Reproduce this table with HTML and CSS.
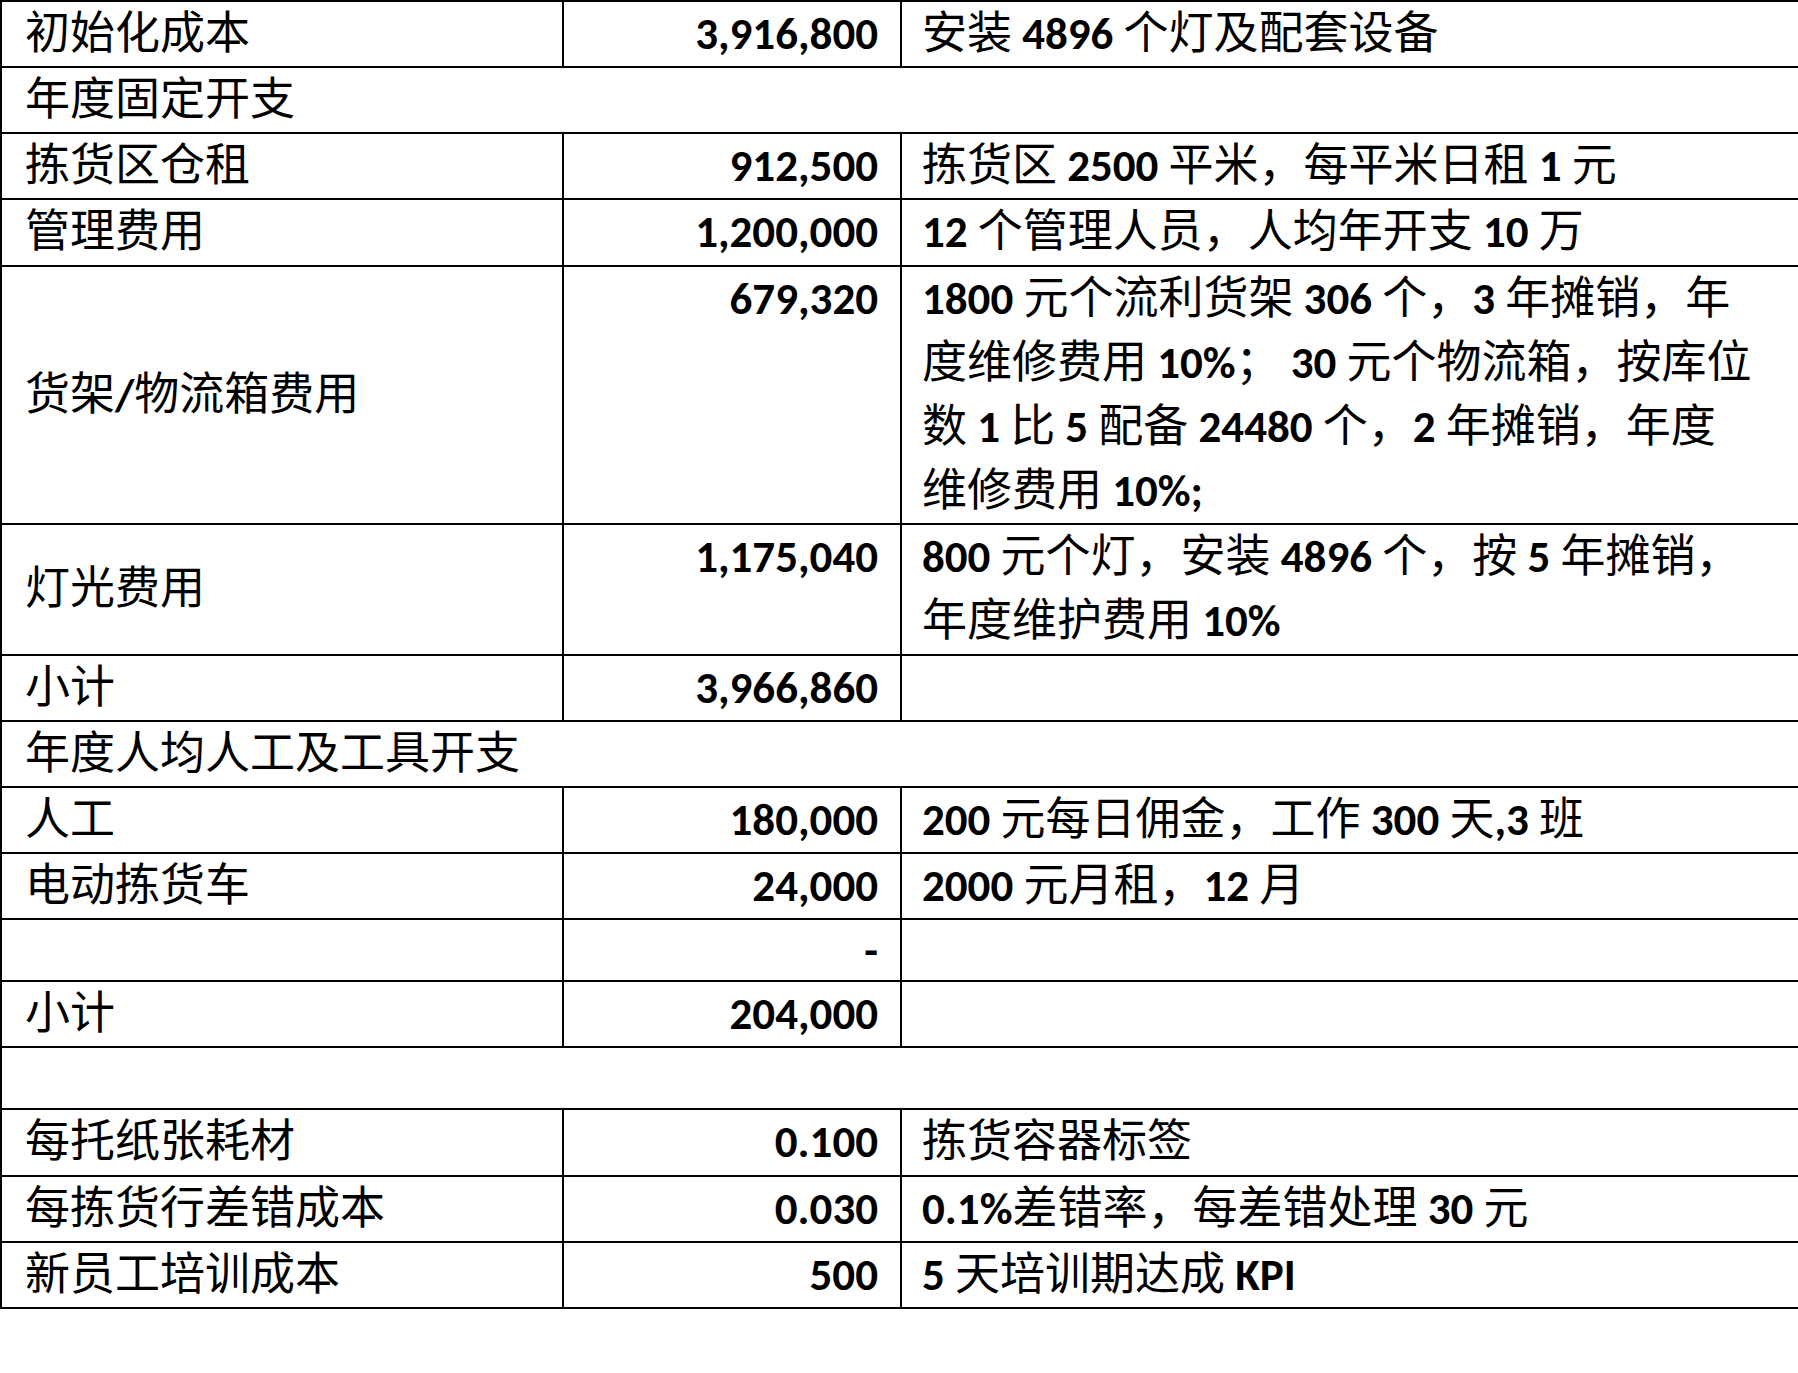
FILE: index.html
```html
<!DOCTYPE html>
<html lang="zh-CN">
<head>
<meta charset="utf-8">
<title>成本表</title>
<link rel="stylesheet" href="styles.css">
</head>
<body>
<table class="cost">
  <colgroup>
    <col class="c-label">
    <col class="c-num">
    <col class="c-desc">
  </colgroup>
  <tbody>
    <tr>
      <td class="label">初始化成本</td>
      <td class="num">3,916,800</td>
      <td class="desc">安装 <span class="n">4896</span> 个灯及配套设备</td>
    </tr>
    <tr>
      <td class="label" colspan="3">年度固定开支</td>
    </tr>
    <tr>
      <td class="label">拣货区仓租</td>
      <td class="num">912,500</td>
      <td class="desc">拣货区 <span class="n">2500</span> 平米，每平米日租 <span class="n">1</span> 元</td>
    </tr>
    <tr>
      <td class="label">管理费用</td>
      <td class="num">1,200,000</td>
      <td class="desc"><span class="n">12</span> 个管理人员，人均年开支 <span class="n">10</span> 万</td>
    </tr>
    <tr>
      <td class="label">货架<span class="n">/</span>物流箱费用</td>
      <td class="num">679,320</td>
      <td class="desc"><span class="ln"><span class="n">1800</span> 元个流利货架 <span class="n">306</span> 个，<span class="n">3</span> 年摊销，年</span><span class="ln">度维修费用 <span class="n">10%</span>； <span class="n">30</span> 元个物流箱，按库位</span><span class="ln">数 <span class="n">1</span> 比 <span class="n">5</span> 配备 <span class="n">24480</span> 个，<span class="n">2</span> 年摊销，年度</span><span class="ln">维修费用 <span class="n">10%;</span></span></td>
    </tr>
    <tr>
      <td class="label">灯光费用</td>
      <td class="num">1,175,040</td>
      <td class="desc"><span class="ln"><span class="n">800</span> 元个灯，安装 <span class="n">4896</span> 个，按 <span class="n">5</span> 年摊销，</span><span class="ln">年度维护费用 <span class="n">10%</span></span></td>
    </tr>
    <tr>
      <td class="label">小计</td>
      <td class="num">3,966,860</td>
      <td class="desc"></td>
    </tr>
    <tr>
      <td class="label" colspan="3">年度人均人工及工具开支</td>
    </tr>
    <tr>
      <td class="label">人工</td>
      <td class="num">180,000</td>
      <td class="desc"><span class="n">200</span> 元每日佣金，工作 <span class="n">300</span> 天<span class="n">,3</span> 班</td>
    </tr>
    <tr>
      <td class="label">电动拣货车</td>
      <td class="num">24,000</td>
      <td class="desc"><span class="n">2000</span> 元月租，<span class="n">12</span> 月</td>
    </tr>
    <tr class="short">
      <td class="label"></td>
      <td class="num">-</td>
      <td class="desc"></td>
    </tr>
    <tr>
      <td class="label">小计</td>
      <td class="num">204,000</td>
      <td class="desc"></td>
    </tr>
    <tr class="spacer">
      <td colspan="3"></td>
    </tr>
    <tr>
      <td class="label">每托纸张耗材</td>
      <td class="num">0.100</td>
      <td class="desc">拣货容器标签</td>
    </tr>
    <tr>
      <td class="label">每拣货行差错成本</td>
      <td class="num">0.030</td>
      <td class="desc"><span class="n">0.1%</span>差错率，每差错处理 <span class="n">30</span> 元</td>
    </tr>
    <tr>
      <td class="label">新员工培训成本</td>
      <td class="num">500</td>
      <td class="desc"><span class="n">5</span> 天培训期达成 <span class="n">KPI</span></td>
    </tr>
  </tbody>
</table>
</body>
</html>
```

FILE: styles.css
```css
html, body {
  margin: 0;
  padding: 0;
  background: #ffffff;
  overflow: hidden;
}

body {
  width: 1798px;
  height: 1373px;
}

.cost {
  border-collapse: collapse;
  table-layout: fixed;
  width: 1812px;
  font-family: Carlito, "Liberation Sans", "Noto Sans CJK SC", sans-serif;
  font-size: 45px;
  line-height: 64.15px;
  color: #000000;
}

.c-label { width: 562px; }
.c-num { width: 338px; }
.c-desc { width: 912px; }

.cost td {
  border: 2px solid #000000;
  padding: 0 22px 0 23px;
  white-space: nowrap;
  overflow: hidden;
}

.label {
  text-align: left;
  vertical-align: middle;
}

.num {
  text-align: right;
  vertical-align: top;
  font-weight: 700;
}

.cost td.desc {
  text-align: left;
  vertical-align: top;
  padding-left: 20px;
}

.n {
  font-weight: 700;
}

.ln {
  display: block;
}

.short td {
  line-height: 60px;
  vertical-align: middle;
}

.spacer td {
  height: 60px;
  line-height: 60px;
}
```
